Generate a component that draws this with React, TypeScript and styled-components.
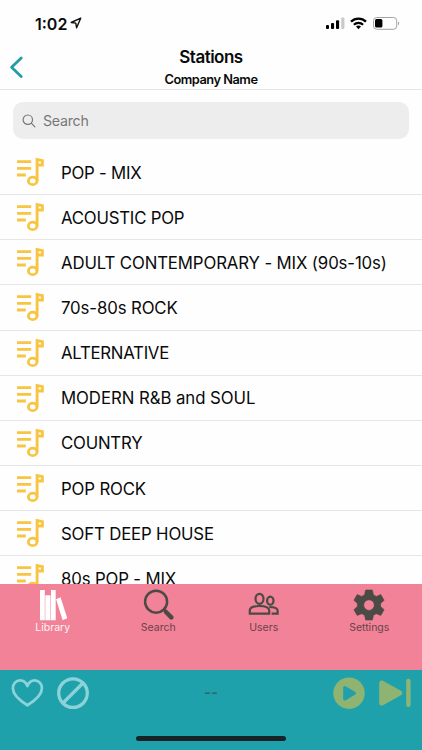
import React from 'react';
import styled, { createGlobalStyle } from 'styled-components';

const GlobalStyle = createGlobalStyle`
  * { box-sizing: border-box; }
  body { margin: 0; background: #fff; font-family: Inter, "Liberation Sans", sans-serif; color: #0a0a0a; }
`;

const Screen = styled.div`
  width: 422px;
  height: 750px;
  display: flex;
  flex-direction: column;
  overflow: hidden;
  background: #fefefe;
`;

const StatusBar = styled.div`
  flex: none;
  height: 46px;
  display: flex;
  justify-content: space-between;
  padding: 0 22px 0 35px;
`;

const Clock = styled.div`
  display: flex;
  gap: 3px;
  font-size: 16px;
  font-weight: 600;
  line-height: 20px;
  padding-top: 14px;
  letter-spacing: 0;
  svg { margin-top: 3px; }
`;

const StatusIcons = styled.div`
  display: flex;
  gap: 5px;
  padding-top: 16px;
`;

const NavBar = styled.header`
  flex: none;
  height: 44px;
  display: grid;
  grid-template-columns: 40px 1fr 40px;
  border-bottom: 1px solid #e5e5e6;
`;

const BackButton = styled.button`
  border: 0;
  background: none;
  padding: 9px 0 0 9px;
  display: flex;
  align-items: flex-start;
`;

const Titles = styled.div`
  display: flex;
  flex-direction: column;
  align-items: center;
`;

const Title = styled.h1`
  margin: 0;
  font-size: 17px;
  line-height: 22px;
  font-weight: 600;
  letter-spacing: -0.5px;
`;

const Subtitle = styled.div`
  font-size: 12.8px;
  line-height: 18px;
  margin-top: 3px;
  font-weight: 600;
  letter-spacing: -0.48px;
`;

const SearchField = styled.div`
  flex: none;
  height: 36.5px;
  margin: 12.3px 13px 11.2px;
  display: flex;
  align-items: center;
  gap: 7px;
  padding-left: 9px;
  border-radius: 10px;
  background: #ededed;
  color: #77777a;
  font-size: 14.2px;
  letter-spacing: -0.25px;
`;

const List = styled.ul`
  flex: none;
  height: 434px;
  margin: 0;
  padding: 0;
  overflow: hidden;
  list-style: none;
`;

const Row = styled.li`
  height: 45.15px;
  display: flex;
  align-items: center;
  gap: 16px;
  padding-left: 16px;
  border-bottom: 1px solid #e6e6e8;
`;

const Label = styled.span<{ $tracking: number }>`
  white-space: nowrap;
  font-size: 16.8px;
  line-height: 22px;
  padding-top: 1px;
  letter-spacing: ${p => p.$tracking}px;
`;

const Tabs = styled.nav`
  flex: none;
  height: 86px;
  display: grid;
  grid-template-columns: repeat(4, 1fr);
  background: #f28297;
`;

const Tab = styled.div<{ $active?: boolean }>`
  display: flex;
  flex-direction: column;
  align-items: center;
  padding-top: 5px;
  color: ${p => (p.$active ? '#ffffff' : '#4b4a45')};
`;

const TabLabel = styled.span<{ $active?: boolean }>`
  font-size: 10.5px;
  line-height: 14px;
  margin-top: -0.4px;
  letter-spacing: 0;
  color: ${p => (p.$active ? '#fff3f5' : '#69444b')};
`;

const Player = styled.footer`
  flex: none;
  height: 80px;
  display: flex;
  flex-direction: column;
  align-items: center;
  background: #1fa1ac;
`;

const Controls = styled.div`
  width: 100%;
  height: 67px;
  display: grid;
  grid-template-columns: 1fr auto 1fr;
  padding: 7px 11px 0;
`;

const Group = styled.div<{ $end?: boolean }>`
  display: flex;
  gap: 13px;
  justify-content: ${p => (p.$end ? 'flex-end' : 'flex-start')};
  color: ${p => (p.$end ? '#8fb472' : '#8cd2d9')};
`;

const TrackName = styled.span`
  font-size: 15px;
  font-weight: 600;
  line-height: 32px;
  color: #32686c;
`;

const HomeIndicator = styled.div`
  width: 150px;
  height: 5px;
  margin-top: -1px;
  border-radius: 3px;
  background: #172427;
`;

const MusicIcon = () => (
  <svg width="29" height="30" viewBox="16 157 29 30" fill="none" stroke="#f8c542">
    <path d="M17 161.6H31.2M17 168.4H31.2M17 175H25.8" strokeWidth="2.8" />
    <ellipse cx="32.7" cy="180.9" rx="4.3" ry="3.7" strokeWidth="2.8" />
    <path d="M37.1 181V159.6L42.4 160.6V165H38" strokeWidth="2.9" />
  </svg>
);

const Icons = {
  library: (
    <svg width="32" height="32" viewBox="37 589 32 32" fill="currentColor">
      <path d="M40 590h4.8v30.3H40zM45.3 595.2h5.2v25.1h-5.2zM51 590h4.7v30.3H51zM56.1 599.2l4.4-2 6.8 21-4.7 2z" />
    </svg>
  ),
  search: (
    <svg width="32" height="32" viewBox="142 589 32 32" fill="none" stroke="currentColor">
      <circle cx="156.1" cy="601.7" r="11" strokeWidth="2.5" />
      <path d="M164 609.5l3 3" strokeWidth="3" />
      <path d="M166 612l5.3 5.4" strokeWidth="4.4" strokeLinecap="round" />
    </svg>
  ),
  users: (
    <svg width="32" height="32" viewBox="248 589 32 32" fill="none" stroke="currentColor" strokeWidth="2.2">
      <ellipse cx="259.5" cy="598.8" rx="4" ry="5" />
      <path d="M249.8 613.7v-3.1c0-3 3.8-4.6 9.7-4.6s9.7 1.6 9.7 4.6v3.1z" />
      <ellipse cx="270.3" cy="600.7" rx="3.2" ry="4" />
      <path d="M269.3 607c5.3 0 8.3 1.2 8.3 3.6v3.1h-6" />
    </svg>
  ),
  settings: (
    <svg width="32" height="32" viewBox="353 589 32 32" fill="currentColor" fillRule="evenodd">
      <path d="M365.6 590h6.8l1 4.7 2.8 1.7 4.6-1.8 3.3 5.7-3.5 3.1v3.2l3.5 3.1-3.3 5.7-4.6-1.7-2.8 1.6-1 4.7h-6.8l-1-4.7-2.8-1.6-4.6 1.7-3.3-5.7 3.5-3.1v-3.2l-3.5-3.1 3.3-5.7 4.6 1.8 2.8-1.7zM369 599.8a5.3 5.3 0 1 0 0 10.6a5.3 5.3 0 1 0 0-10.6z" stroke="currentColor" strokeWidth=".6" strokeLinejoin="round" />
    </svg>
  ),
};

const stations: [string, number][] = [
  ['POP - MIX', -0.22],
  ['ACOUSTIC POP', -0.22],
  ['ADULT CONTEMPORARY - MIX (90s-10s)', -0.13],
  ['70s-80s ROCK', -0.12],
  ['ALTERNATIVE', -0.27],
  ['MODERN R&B and SOUL', -0.06],
  ['COUNTRY', -0.22],
  ['POP ROCK', -0.15],
  ['SOFT DEEP HOUSE', -0.17],
  ['80s POP - MIX', -0.15],
];

export default function App() {
  return (
    <Screen>
      <GlobalStyle />
      <StatusBar>
        <Clock>
          1:02
          <svg width="12" height="12" viewBox="0 0 12 12" fill="none" stroke="#111" strokeWidth="1.4" strokeLinejoin="round">
            <path d="M10.7 1.2L1.2 5.5L5.8 6.1L6.6 10.8Z" />
          </svg>
        </Clock>
        <StatusIcons>
          <svg width="20" height="14" viewBox="325 16 20 14">
            <rect x="326" y="25" width="3" height="4" rx="1" />
            <rect x="331" y="23" width="3.1" height="6" rx="1" />
            <rect x="336" y="20.3" width="3.1" height="8.7" rx="1" />
            <rect x="341.3" y="17.5" width="3.1" height="11.5" rx="1" fill="#c9c9c9" />
          </svg>
          <svg width="17" height="14" viewBox="350 16 17 14" fill="none" stroke="#000" strokeWidth="2.3">
            <path d="M351 21.6a10.7 10.7 0 0 1 15 0M353.9 24.8a6.6 6.6 0 0 1 9.2 0" />
            <path d="M358.5 29.2l-2.5-2.6a3.7 3.7 0 0 1 5 0z" fill="#000" stroke="none" />
          </svg>
          <svg width="28" height="14" viewBox="372 16 28 14">
            <rect x="373.5" y="17.5" width="23.2" height="11.8" rx="3.2" fill="none" stroke="#a2a2a2" />
            <rect x="375" y="19.1" width="7.4" height="8.4" rx="1.5" />
            <path d="M398 21.5c1.5.6 1.5 3.2 0 3.8z" fill="#a2a2a2" />
          </svg>
        </StatusIcons>
      </StatusBar>
      <NavBar>
        <BackButton aria-label="Back">
          <svg width="15" height="24" viewBox="9 55 15 24" fill="none" stroke="#229da5" strokeWidth="2.8" strokeLinecap="round" strokeLinejoin="round">
            <path d="M21.2 58L11.6 67.3L21.2 76.5" />
          </svg>
        </BackButton>
        <Titles>
          <Title>Stations</Title>
          <Subtitle>Company Name</Subtitle>
        </Titles>
      </NavBar>
      <SearchField>
        <svg width="14" height="14" viewBox="0 0 14 14" fill="none" stroke="#77777a" strokeWidth="1.2" strokeLinecap="round">
          <circle cx="5.8" cy="5.7" r="4.7" />
          <path d="M9.3 9.2l3.6 3.6" />
        </svg>
        Search
      </SearchField>
      <List>
        {stations.map(([name, tracking]) => (
          <Row key={name}>
            <MusicIcon />
            <Label $tracking={tracking}>{name}</Label>
          </Row>
        ))}
      </List>
      <Tabs>
        <Tab $active>{Icons.library}<TabLabel $active>Library</TabLabel></Tab>
        <Tab>{Icons.search}<TabLabel>Search</TabLabel></Tab>
        <Tab>{Icons.users}<TabLabel>Users</TabLabel></Tab>
        <Tab>{Icons.settings}<TabLabel>Settings</TabLabel></Tab>
      </Tabs>
      <Player>
        <Controls>
          <Group>
            <svg width="33" height="33" viewBox="11 677 33 33" fill="none" stroke="currentColor" strokeWidth="2.8" strokeLinejoin="round">
              <path d="M27.4 705.3C18 699.5 12.9 694.5 12.9 688.3C12.9 683.8 16 680.4 20 680.4C23.4 680.4 26.2 682.6 27.4 686C28.6 682.6 31.4 680.4 34.8 680.4C38.8 680.4 41.9 683.8 41.9 688.3C41.9 694.5 36.8 699.5 27.4 705.3Z" />
            </svg>
            <svg width="33" height="33" viewBox="57 677 33 33" fill="none" stroke="currentColor" strokeWidth="3.3">
              <circle cx="73" cy="693.1" r="14.3" />
              <path d="M63 703L83 683" />
            </svg>
          </Group>
          <TrackName>--</TrackName>
          <Group $end>
            <svg width="33" height="33" viewBox="332 677 33 33" fill="currentColor">
              <circle cx="349" cy="693.2" r="15.7" />
              <path d="M344.7 687.5v11.6l9.8-5.8z" fill="#1fa1ac" stroke="#1fa1ac" strokeWidth="3" strokeLinejoin="round" />
            </svg>
            <svg width="33" height="33" viewBox="378 677 33 33" fill="currentColor" stroke="currentColor" strokeLinejoin="round" strokeLinecap="round">
              <path d="M381.7 683v20l18-10z" strokeWidth="5" />
              <path d="M408.4 681v23.7" strokeWidth="4.4" />
            </svg>
          </Group>
        </Controls>
        <HomeIndicator />
      </Player>
    </Screen>
  );
}
